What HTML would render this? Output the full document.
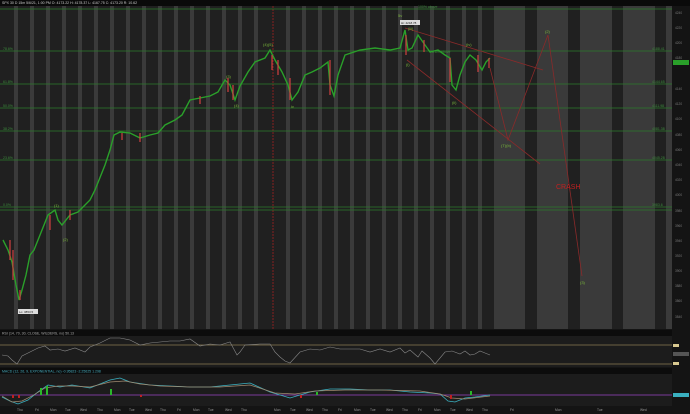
<!DOCTYPE html><html><head><style>
body{margin:0;background:#141414;width:690px;height:414px;overflow:hidden;font-family:"Liberation Sans",sans-serif}
svg{display:block}
</style></head><body>
<svg width="690" height="414" xmlns="http://www.w3.org/2000/svg" font-family="Liberation Sans" font-size="4">
<rect width="690" height="414" fill="#141414"/>
<rect x="0" y="0" width="690" height="6" fill="#0a0a0a"/>
<text x="2" y="4" fill="#ccc" font-size="3.5">SPX 30 D 15m   5/6/21, 1:00 PM   O: 4173.22   H: 4178.37   L: 4167.75   C: 4173.20   R: 10.62</text>
<rect x="0" y="6" width="672" height="323" fill="#202020"/>
<g fill="#3a3a3a">
<rect x="14" y="6" width="4" height="323"/><rect x="30" y="6" width="4" height="323"/><rect x="46" y="6" width="4" height="323"/><rect x="62" y="6" width="4" height="323"/><rect x="78" y="6" width="4" height="323"/><rect x="94" y="6" width="4" height="323"/><rect x="110" y="6" width="4" height="323"/><rect x="126" y="6" width="4" height="323"/><rect x="142" y="6" width="4" height="323"/><rect x="158" y="6" width="4" height="323"/><rect x="174" y="6" width="4" height="323"/><rect x="190" y="6" width="4" height="323"/><rect x="206" y="6" width="4" height="323"/><rect x="222" y="6" width="4" height="323"/><rect x="238" y="6" width="4" height="323"/><rect x="254" y="6" width="4" height="323"/><rect x="286" y="6" width="4" height="323"/><rect x="302" y="6" width="4" height="323"/><rect x="318" y="6" width="4" height="323"/><rect x="334" y="6" width="4" height="323"/><rect x="350" y="6" width="4" height="323"/><rect x="366" y="6" width="4" height="323"/><rect x="382" y="6" width="4" height="323"/><rect x="398" y="6" width="4" height="323"/><rect x="414" y="6" width="4" height="323"/><rect x="430" y="6" width="4" height="323"/><rect x="446" y="6" width="4" height="323"/><rect x="462" y="6" width="4" height="323"/><rect x="478" y="6" width="4" height="323"/>
<rect x="494" y="6" width="31" height="323"/><rect x="537" y="6" width="31" height="323"/><rect x="580" y="6" width="32" height="323"/><rect x="623" y="6" width="32" height="323"/><rect x="666" y="6" width="6" height="323"/>
</g>
<line x1="273" y1="6" x2="273" y2="329" stroke="#a02020" stroke-width="0.8" stroke-dasharray="2,1"/>
<g stroke="#2a7a2a" stroke-width="0.7">
<line x1="0" y1="9" x2="672" y2="9"/><line x1="0" y1="51" x2="672" y2="51"/><line x1="0" y1="84" x2="672" y2="84"/><line x1="0" y1="108" x2="672" y2="108"/><line x1="0" y1="131" x2="672" y2="131"/><line x1="0" y1="160" x2="672" y2="160"/><line x1="0" y1="207" x2="672" y2="207"/><line x1="0" y1="210" x2="672" y2="210"/>
</g>
<g fill="#3c8a3c" font-size="3.5">
<text x="3" y="50">78.6%</text><text x="3" y="83">61.8%</text><text x="3" y="107">50.0%</text><text x="3" y="130">38.2%</text><text x="3" y="159">23.6%</text><text x="3" y="206">0.0%</text>
<text x="418" y="8">100% above</text><text x="430" y="53">78.6% above</text>
<text x="652" y="50">4188.41</text><text x="652" y="83">4144.65</text><text x="652" y="107">4111.98</text><text x="652" y="130">4081.38</text><text x="652" y="159">4045.28</text><text x="652" y="206">3983.6</text>
</g>
<polyline fill="none" stroke="#2aa02a" stroke-width="1.4" points="3,240 8,250 12,262 16,285 19,300 22,290 26,275 30,255 34,250 40,235 44,225 48,215 55,210 58,220 62,225 70,215 78,212 85,205 90,200 95,190 105,165 110,150 114,135 120,132 130,133 140,138 150,135 158,133 165,125 175,120 182,115 190,100 200,98 210,96 218,92 225,80 230,85 235,100 240,86 248,72 255,62 265,58 270,50 275,60 282,72 288,85 292,100 298,92 305,75 312,72 320,68 328,62 330,85 334,96 338,75 345,55 360,50 375,48 390,50 400,48 405,30 408,50 412,48 418,35 425,45 430,52 438,50 445,55 450,58 452,85 456,90 460,75 465,62 470,55 476,60 482,70 486,62 490,58"/>
<g stroke="#d04040" stroke-width="1.2">
<line x1="10" y1="240" x2="10" y2="260"/><line x1="13" y1="250" x2="13" y2="280"/><line x1="20" y1="290" x2="20" y2="300"/><line x1="50" y1="215" x2="50" y2="230"/><line x1="70" y1="210" x2="70" y2="220"/><line x1="122" y1="133" x2="122" y2="140"/><line x1="140" y1="133" x2="140" y2="142"/><line x1="200" y1="96" x2="200" y2="104"/><line x1="228" y1="78" x2="228" y2="92"/><line x1="233" y1="85" x2="233" y2="100"/><line x1="272" y1="55" x2="272" y2="70"/><line x1="278" y1="60" x2="278" y2="75"/><line x1="290" y1="78" x2="290" y2="100"/><line x1="330" y1="60" x2="330" y2="95"/><line x1="406" y1="35" x2="406" y2="55"/><line x1="424" y1="40" x2="424" y2="52"/><line x1="450" y1="58" x2="450" y2="82"/><line x1="478" y1="55" x2="478" y2="72"/><line x1="489" y1="58" x2="489" y2="68"/>
</g>
<g stroke="#8a2a2a" stroke-width="0.8" fill="none">
<line x1="405" y1="28" x2="543" y2="70"/><line x1="407" y1="60" x2="540" y2="164"/>
<polyline points="490,68 508,140 548,35 582,276"/>
</g>
<text x="556" y="189" fill="#c02020" font-size="7">CRASH</text>
<g fill="#7ab83a" font-size="4">
<text x="263" y="46">(4)(5)</text><text x="226" y="78">(3)</text><text x="234" y="107">(4)</text><text x="291" y="108">iv</text><text x="54" y="207">(1)</text><text x="63" y="241">(2)</text>
<text x="398" y="17">5v</text><text x="408" y="30">(iii)</text><text x="406" y="66">(i)</text><text x="466" y="46">(iv)</text><text x="452" y="104">(ii)</text><text x="501" y="147">(T)(b)</text><text x="545" y="33">(2)</text><text x="580" y="284">(3)</text>
</g>
<rect x="400" y="20" width="20" height="5" fill="#ddd"/><text x="401" y="24" font-size="3" fill="#222">Hi: 4218.78</text>
<rect x="18" y="309" width="20" height="5" fill="#ddd"/><text x="19" y="313" font-size="3" fill="#222">Lo: 3853.5</text>
<rect x="672" y="6" width="18" height="323" fill="#141414"/>
<g fill="#777" font-size="3.2">
<text x="675" y="14">4240</text><text x="675" y="29">4220</text><text x="675" y="44">4200</text><text x="675" y="59">4180</text><text x="675" y="90">4140</text><text x="675" y="105">4120</text><text x="675" y="120">4100</text><text x="675" y="136">4080</text><text x="675" y="151">4060</text><text x="675" y="166">4040</text><text x="675" y="181">4020</text><text x="675" y="196">4000</text><text x="675" y="212">3980</text><text x="675" y="227">3960</text><text x="675" y="242">3940</text><text x="675" y="257">3920</text><text x="675" y="272">3900</text><text x="675" y="287">3880</text><text x="675" y="302">3860</text><text x="675" y="318">3840</text>
</g>
<rect x="673" y="60" width="16" height="5" fill="#2aa02a"/>
<rect x="0" y="330" width="672" height="6" fill="#0c0c0c"/>
<text x="2" y="334.5" font-size="3.5" fill="#aaa">RSI (14, 70, 30, CLOSE, WILDERS, no)   50.13</text>
<rect x="0" y="336" width="672" height="31" fill="#1c1c1c"/>
<line x1="0" y1="345" x2="672" y2="345" stroke="#8a7a50" stroke-width="0.8"/>
<line x1="0" y1="364" x2="672" y2="364" stroke="#8a7a50" stroke-width="0.8"/>
<polyline fill="none" stroke="#888" stroke-width="0.6" points="2,355 8,356 12,360 17,364 22,356 30,352 38,348 45,346 50,350 58,349 65,351 75,348 85,352 90,347 100,343 110,338 120,338 130,340 140,345 150,343 160,342 170,341 180,341 190,339 200,346 210,344 220,345 230,342 237,355 240,352 245,345 260,344 270,344 275,352 280,357 285,361 290,363 300,352 310,349 320,350 330,347 340,349 350,349 360,349 370,352 380,349 390,352 400,348 405,353 410,350 418,357 422,351 430,358 435,364 445,352 452,351 460,354 465,351 470,355 475,354 480,351 485,353 490,355"/>
<rect x="673" y="344" width="6" height="3" fill="#d8c890"/><rect x="673" y="362" width="6" height="3" fill="#d8c890"/>
<rect x="673" y="352" width="16" height="4" fill="#555"/>
<rect x="0" y="368" width="672" height="6" fill="#0c0c0c"/>
<text x="2" y="372.5" font-size="3.5" fill="#4ab">MACD (12, 26, 9, EXPONENTIAL, no)   -0.95823   -2.25625   1.298</text>
<rect x="0" y="374" width="672" height="32" fill="#1c1c1c"/>
<line x1="0" y1="395" x2="672" y2="395" stroke="#7a3a9a" stroke-width="1"/>
<polyline fill="none" stroke="#3ab0c0" stroke-width="0.8" points="2,397 10,401 18,404 28,400 38,392 48,385 60,387 72,385 90,388 110,380 120,378 130,382 150,385 170,386 190,387 210,387 230,385 250,383 270,392 290,398 310,392 330,389 350,389 370,390 390,390 410,392 430,393 440,394 448,401 455,402 465,398 475,397 490,395"/>
<polyline fill="none" stroke="#a08a70" stroke-width="0.7" points="2,396 12,402 22,401 32,396 45,388 58,386 72,386 90,387 110,382 125,381 140,384 160,386 190,387 220,387 250,385 275,393 295,394 315,391 345,390 380,390 420,391 440,394 452,398 465,399 490,396"/>
<g fill="#2ab82a"><rect x="40" y="388" width="2" height="7"/><rect x="46" y="386" width="2" height="9"/><rect x="110" y="389" width="2" height="6"/><rect x="316" y="392" width="2" height="3"/><rect x="470" y="391" width="2" height="4"/></g>
<g fill="#c02020"><rect x="12" y="395" width="2" height="3"/><rect x="18" y="395" width="2" height="3"/><rect x="140" y="395" width="2" height="2"/><rect x="300" y="395" width="2" height="3"/><rect x="450" y="395" width="2" height="4"/></g>
<rect x="673" y="393" width="16" height="4" fill="#3ab0c0"/>
<g fill="#999" font-size="3.3">
<text x="17" y="411">Thu</text><text x="35" y="411">Fri</text><text x="50" y="411">Mon</text><text x="65" y="411">Tue</text><text x="80" y="411">Wed</text><text x="97" y="411">Thu</text><text x="114" y="411">Mon</text><text x="129" y="411">Tue</text><text x="145" y="411">Wed</text><text x="160" y="411">Thu</text><text x="177" y="411">Fri</text><text x="193" y="411">Mon</text><text x="208" y="411">Tue</text><text x="225" y="411">Wed</text><text x="241" y="411">Thu</text><text x="274" y="411">Mon</text><text x="290" y="411">Tue</text><text x="306" y="411">Wed</text><text x="322" y="411">Thu</text><text x="338" y="411">Fri</text><text x="354" y="411">Mon</text><text x="370" y="411">Tue</text><text x="386" y="411">Wed</text><text x="402" y="411">Thu</text><text x="418" y="411">Fri</text><text x="434" y="411">Mon</text><text x="450" y="411">Tue</text><text x="466" y="411">Wed</text><text x="482" y="411">Thu</text><text x="510" y="411">Fri</text><text x="555" y="411">Mon</text><text x="597" y="411">Tue</text><text x="640" y="411">Wed</text>
</g>
</svg>
</body></html>
